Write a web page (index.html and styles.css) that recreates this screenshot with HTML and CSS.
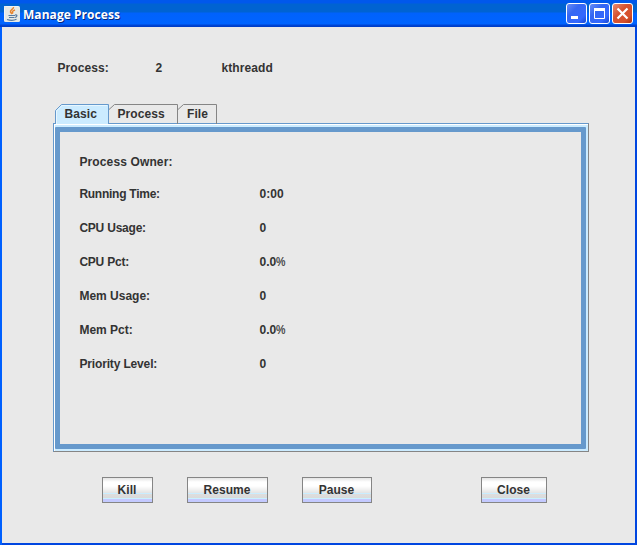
FILE: index.html
```html
<!DOCTYPE html>
<html lang="en">
<head>
<meta charset="utf-8">
<title>Manage Process</title>
<link rel="stylesheet" href="styles.css">
</head>
<body>
<div class="window">
  <header class="titlebar">
    <svg class="java" width="16" height="16" viewBox="0 0 16 16">
      <rect width="16" height="16" rx="1.5" fill="#e6e9e6"/>
      <path d="M0 14V1.500Q0 0 1.500 0H14" fill="none" stroke="#fff"/>
      <path d="M9.500 1C10 3 5.500 4 6.500 6.200L8 8M11 4C8 5 8 6 9 7.500" fill="none" stroke="#e8842c" stroke-width="1.500"/>
      <path d="M4.500 9.500H11M5 11.500H10.500M11 9C14 8.500 13 11 11 11.500M3 13.500C6 14.500 10 14.500 12.500 13.300" fill="none" stroke="#587ba0" stroke-width="1.200"/>
    </svg>
    <h1 class="title">Manage Process</h1>
    <div class="controls">
      <svg class="control" viewBox="0 0 19 19"><rect x="4" y="12" width="7" height="3" fill="#fff"/></svg>
      <svg class="control" viewBox="0 0 19 19"><path d="M4.500 5V14.500H14.500V5" fill="none" stroke="#fff"/><path d="M4 5.500H15" stroke="#fff" stroke-width="3"/></svg>
      <svg class="control close" viewBox="0 0 19 19"><path d="M4.500 4.500L14.500 14.500M14.500 4.500L4.500 14.500" stroke="#fff" stroke-width="2.200"/></svg>
    </div>
  </header>
  <main class="content">
    <div class="summary"><span>Process:</span><span>2</span><span>kthreadd</span></div>
    <nav class="tabs">
      <div class="tab basic"><svg width="54" height="20"><path d="M.5 20V6.500L6.500.5H53.500V20" fill="#cbebff" stroke="#6699cc"/><path d="M1.500 20V7L7 1.500H52" fill="none" stroke="#e8f7ff"/></svg><span>Basic</span></div>
      <div class="tab process"><svg width="69" height="20"><path d="M0 5.500L5.500.5H68.500V20" fill="none" stroke="#858585"/></svg><span>Process</span></div>
      <div class="tab file"><svg width="39" height="20"><path d="M0 5.500L5.500.5H38.500V20" fill="none" stroke="#858585"/></svg><span>File</span></div>
    </nav>
    <section class="pane">
      <dl class="details">
        <dt class="owner">Process Owner:</dt><dd></dd>
        <dt class="time">Running Time:</dt><dd>0:00</dd>
        <dt class="cpu">CPU Usage:</dt><dd>0</dd>
        <dt class="cpu">CPU Pct:</dt><dd>0.0<span class="percent">%</span></dd>
        <dt class="mem">Mem Usage:</dt><dd>0</dd>
        <dt class="mem">Mem Pct:</dt><dd>0.0<span class="percent">%</span></dd>
        <dt class="priority">Priority Level:</dt><dd>0</dd>
      </dl>
    </section>
    <footer class="actions">
      <button class="kill">Kill</button><button class="resume">Resume</button><button class="pause">Pause</button><button class="dismiss">Close</button>
    </footer>
  </main>
</div>
</body>
</html>
```
FILE: styles.css
```css
* { box-sizing: border-box; }
body { margin: 0; background: #fff; font: bold 12px/16px "Liberation Sans", Arial, sans-serif; color: #333; letter-spacing: .1px; }
.window { width: 637px; height: 545px; background: #0046e0; box-shadow: inset 2px 0 #0060ff; display: flex; flex-direction: column; }
.titlebar {
  height: 27px; flex: none; display: flex; align-items: center; padding: 0 4px 0 4px;
  background: linear-gradient(#0058ec 0, #0058ec 3px, #0063d2 4px, #0063d2 12px, #0062fc 13px, #0064ff 24px, #0046d5 25px, #003cc4 27px);
}
.java { flex: none; margin-right: 3px; }
.title { margin: 2px 0 0; flex: 1; font: bold 12px/18px "Open Sans", "Noto Sans", sans-serif; letter-spacing: .05px; color: #fff; text-shadow: 1px 1px #06297c; }
.controls { display: flex; gap: 2px; }
.control { width: 21px; height: 21px; border: 1px solid #fff; border-radius: 3px; background: linear-gradient(135deg, #698df7, #3567f2 35%, #3468ff 75%, #1746d0); }
.close { background: linear-gradient(135deg, #e98b70, #d75230 40%, #d6512d 75%, #a93212); }
.content { flex: 1; margin: 0 2px 2px; background: #e9e9e9; padding: 33px 0 0 51px; display: flex; flex-direction: column; }
.summary { display: grid; grid-template-columns: 98px 66px 1fr; height: 44px; padding-left: 4.4px; flex: none; }
.tabs { display: flex; height: 19px; padding-left: 2px; flex: none; }
.tab { display: grid; height: 20px; z-index: 1; }
.tab > * { grid-area: 1 / 1; }
.tab span { margin-top: 2px; padding-left: 9.4px; }
.tab svg { display: block; }
.tab.process span { padding-left: 8.4px; }
.tab.file span { padding-left: 9px; }
.pane {
  width: 536px; height: 329px; flex: none;
  border: 1px solid #858585; border-left-color: #6699cc; border-top-color: #6699cc;
  background: #cbebff; box-shadow: inset 1px 1px #fff;
  padding: 3px 2px 2px 1px; display: flex;
}
.details {
  margin: 0; flex: 1; border: 5px solid #6699cc; border-radius: 1px; background: #e9e9e9;
  padding: 22px 0 0 19.4px; display: grid; grid-template-columns: 180px 1fr; grid-template-rows: 32px repeat(6, 34px);
}
dd { margin: 0; }
.owner { letter-spacing: .13px; }
.time { letter-spacing: -.26px; }
.cpu { letter-spacing: -.22px; }
.mem { letter-spacing: 0; }
.priority { letter-spacing: -.15px; }
.percent { display: inline-block; font-weight: normal; transform: scaleX(.88); transform-origin: left; -webkit-text-stroke: .2px #333; }
.actions { display: flex; padding: 25px 0 0 49px; }
button {
  height: 26px; border: 1px solid #858585; padding: 0 1px 0 0; font: inherit; color: inherit; letter-spacing: .05px;
  background: linear-gradient(#e4e4e4 0, #fff 4px, #fff 8px, #e3e3e3 15px, #c9edff 15px, #c9edff 16px, #dedede 16px, #dadada 20px, #c8f0ff 20px, #c8f0ff 21px, #c5c8ff 21px, #c5c8ff 23px, #bfceff 24px);
}
.kill { width: 51px; }
.resume { width: 81px; margin-left: 34px; }
.pause { width: 70px; margin-left: 34px; }
.dismiss { width: 66px; margin-left: 109px; }
```
